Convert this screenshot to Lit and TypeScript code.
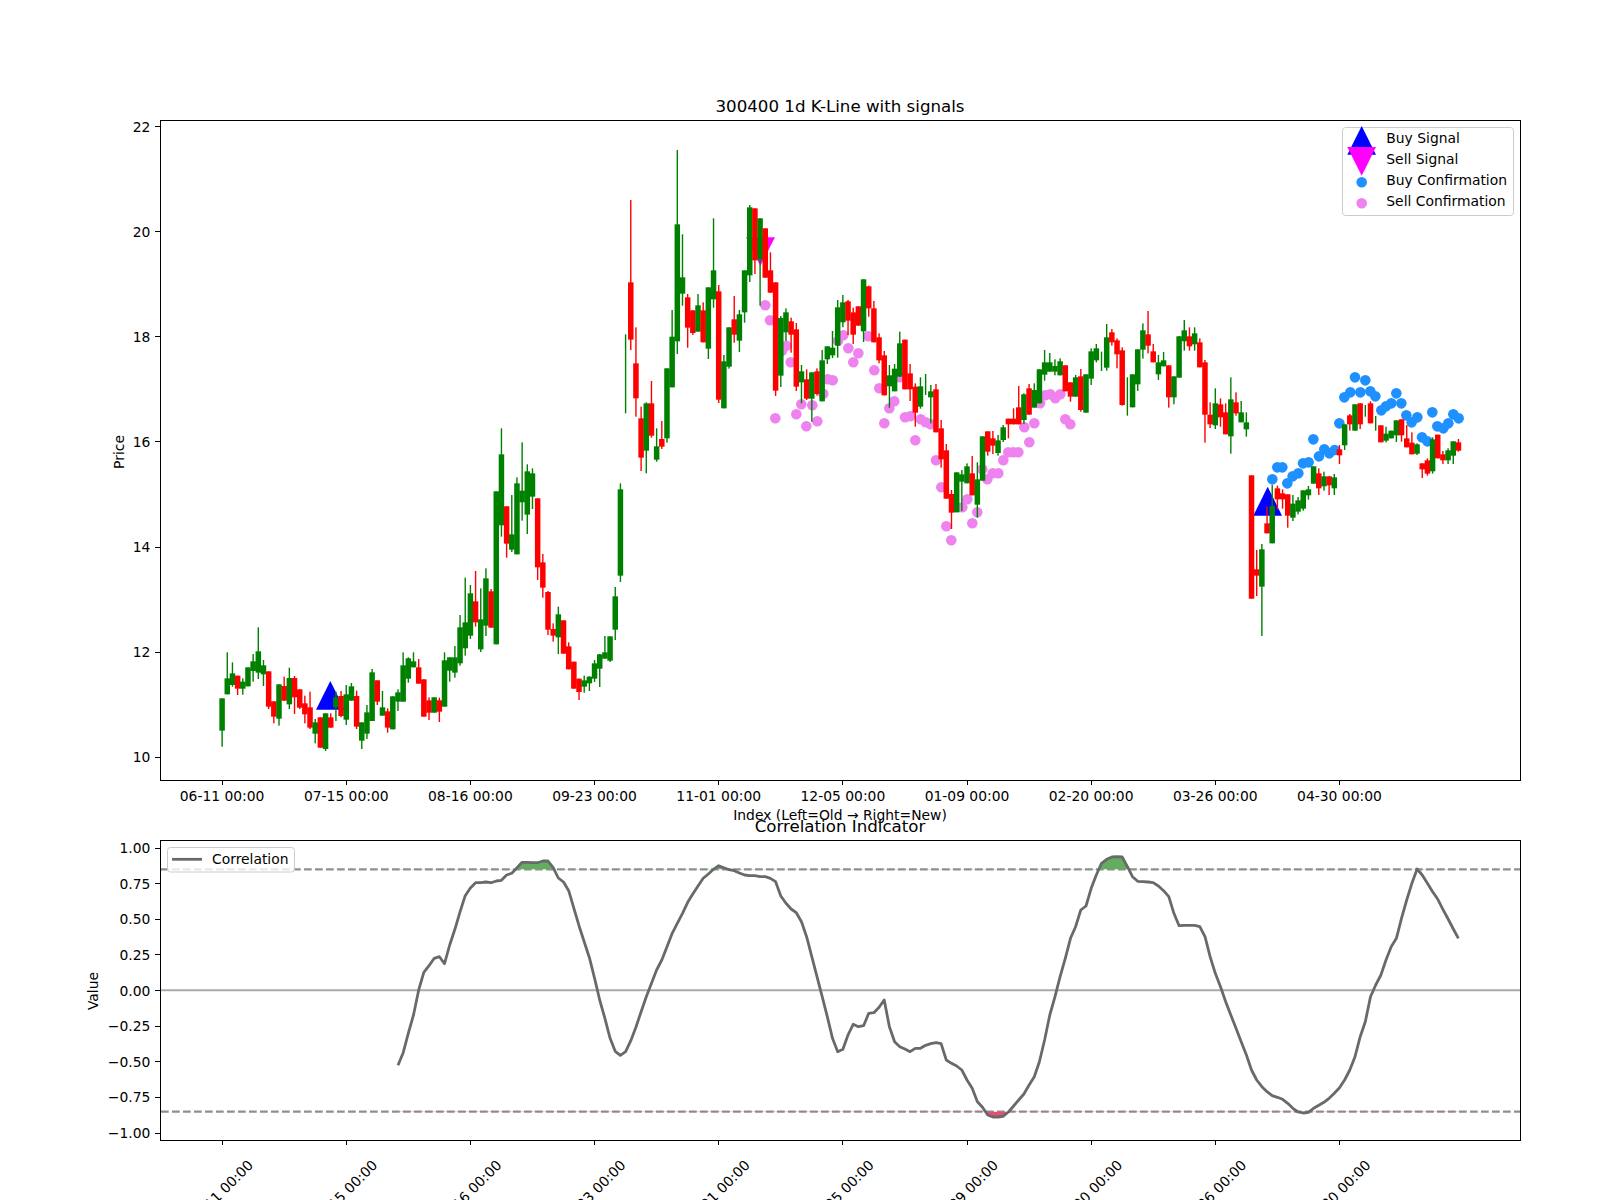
import { LitElement, html, css, svg } from 'lit'
import { customElement } from 'lit/decorators.js'

type Candle = { up: boolean; hi: number; top: number; bot: number; lo: number }

const X0 = 222.1
const DX = 5.173
const cx = (i: number) => X0 + DX * i

// each row: colour, wick top, body top, body bottom, wick bottom (read from crops at 3x)
const parse = (base: number, rows: string): Candle[] =>
  rows
    .trim()
    .split(/\s*;\s*/)
    .filter(Boolean)
    .map((r) => {
      const [c, a, b, d, e] = r.split(/\s+/)
      return {
        up: c === 'g',
        hi: base + +a / 3,
        top: base + +b / 3,
        bot: base + +d / 3,
        lo: base + +e / 3,
      }
    })

const candles: Candle[] = [
  ...parse(560, `g 415 415 512 560; g 277 355 403 403; g 307 340 375 380; r 347 347 386 405; g 355 365 386 404;
    g 322 322 379 379; g 282 304 333 365; g 202 274 338 357; g 300 316 343 378; r 334 334 440 447;
    r 424 424 470 490; g 373 373 476 497; r 350 378 422 422; g 323 354 433 447; r 348 354 412 462;
    r 388 388 443 447; r 407 430 463 490; r 395 442 503 507; g 477 487 521 550; r 472 472 563 563;
    g 460 460 567 573; r 460 472 503 503; g 395 412 442 483; r 393 408 468 472; g 375 403 479 495;
    g 369 379 422 422; r 392 408 500 507; g 487 487 542 567; g 435 457 521 537; g 327 337 483 483;
    r 361 361 425 435; g 393 442 467 467; r 445 454 503 518; g 409 409 508 508; g 388 397 425 453;
    g 277 316 425 425; g 292 295 356 368; g 277 304 322 322; r 297 322 371 371; r 358 358 470 470;
    r 412 421 458 480; g 412 412 458 458; r 413 421 455 486; g 277 301 440 440; g 292 292 332 365;
    g 258 292 338 353`),
  ...parse(400, `g 645 682 790 797; g 533 667 745 767; g 555 580 707 717; r 513 604 667 680; g 565 658 748 756;
    g 505 535 677 708; r 567 574 683 683; g 274 274 733 733; g 85 163 376 410; r 319 319 431 473;
    g 285 403 449 456; g 232 250 463 463; g 127 272 307 362; g 193 214 344 402; g 205 220 290 327;
    r 295 295 502 540; r 462 487 563 593; r 573 576 689 705; r 670 687 707 725; g 620 643 712 762;
    r 661 661 761 761; r 727 739 808 808; r 785 785 866 866; r 836 836 876 900; g 827 841 860 878;
    g 829 830 850 873; g 780 790 836 846; g 762 763 806 861; g 708 757 776 776; g 709 709 782 786;
    g 561 589 689 720; g 250 268 527 546`),
  ...parse(140, `g 583 700 700 820; r 180 427 599 630; r 562 670 775 830; r 800 835 953 993; g 787 790 932 1000;
    r 723 790 887 893; g 865 919 959 965; r 843 897 920 927; g 685 685 895 908; g 510 590 742 742;
    g 30 253 604 642; g 283 412 461 497; r 462 472 563 623; r 511 511 579 585; g 462 496 575 575;
    r 487 511 607 607; g 442 442 626 657; g 235 391 478 503; r 435 454 779 789; g 645 664 805 805;
    g 562 562 680 686; r 468 538 584 608; g 510 523 602 636; g 391 391 517 548; g 195 202 406 426;
    r 205 205 361 402; g 235 235 358 497; r 265 265 413 413; r 337 391 458 458; r 427 427 752 768;
    g 528 534 707 741; g 505 517 577 603; r 533 544 584 638; r 549 568 740 753; g 675 694 727 790;
    r 688 718 776 780; g 697 697 776 845; r 685 694 762 767; g 630 661 784 784; g 619 619 658 672;
    g 573 623 646 654; g 480 502 617 653; g 465 487 547 562; r 480 484 542 585; r 503 517 584 612;
    r 499 499 557 557; g 418 418 574 606; r 437 439 505 530; r 483 505 607 607; r 580 592 661 670;
    r 633 646 766 766; g 675 706 739 803; g 672 686 754 754; g 575 610 710 710`),
  ...parse(300, `r 119 119 268 268; r 192 220 268 303; r 250 260 338 380; g 232 259 320 326; g 222 250 250 285;
    g 255 274 292 370; r 252 268 397 397; r 360 385 478 503; r 432 451 596 596; r 570 582 638 687;
    g 517 517 637 637; g 510 523 545 633; g 490 499 550 550; r 468 520 586 586; g 487 538 614 653;
    g 409 409 542 542; r 394 394 455 467; r 393 415 437 462; g 405 421 459 467; g 375 382 420 426;
    r 356 356 373 415; r 325 356 373 373; r 258 322 373 373; g 280 283 360 372; r 252 265 344 344;
    g 250 270 323 323; g 208 208 310 310; g 150 187 224 242; g 159 187 215 215; g 178 198 215 226;
    g 175 184 226 226; r 196 196 274 274; r 247 247 290 305; g 225 232 290 290; r 207 229 330 335;
    g 223 223 338 338; g 145 154 236 255; g 132 145 181 187; g 155 190 190 213; g 72 112 203 212;
    r 87 97 127 137; r 115 121 163 205; r 142 151 315 317; g 232 290 290 347; g 223 223 322 322;
    g 148 148 253 273; g 70 91 149 176; r 33 103 137 160; r 132 154 187 187; g 165 187 223 240;
    g 156 181 199 199; r 196 196 292 323; g 229 229 292 313; g 108 109 233 233; g 60 91 124 152;
    r 82 109 139 152; g 82 100 133 152; r 115 127 202 202; r 180 187 344 428; r 307 344 373 384;
    g 265 310 376 387; r 295 313 352 380; r 310 337 403 403; g 232 298 409 461; r 277 307 340 347;
    g 303 337 367 367; g 337 367 388 410`),
  ...parse(360, `r 346 346 716 716; r 570 628 647 708; g 552 568 680 828; r 440 490 520 520; g 375 438 550 550;
    r 377 385 418 448; r 388 400 418 446; r 403 403 467 503; g 405 431 473 483; g 411 421 455 463;
    g 391 391 446 452; g 378 388 406 419; g 319 319 371 371; r 325 340 385 405; g 335 349 379 392;
    r 349 349 376 405; g 342 352 385 405; r 255 268 286 312; g 193 193 256 270; r 162 166 193 212;
    g 133 133 212 212; r 130 130 193 207; g 135 150 150 170; r 124 130 190 190; g 168 190 190 212;
    r 196 196 247 247; g 200 221 242 247; g 212 212 235 235; g 181 181 226 246; r 178 178 226 245;
    r 195 235 262 262; r 217 248 283 283; g 250 253 281 285; r 310 310 328 354; r 295 301 341 347;
    g 232 238 334 341; r 224 224 295 295; r 273 283 301 312; g 265 271 301 312; g 244 244 287 312;
    r 237 247 272 275`),
]

const violet: [number, number][] = [
  [765.3, 305.3], [770, 320.3], [786.3, 345.7], [782, 350.7], [790.7, 362.3], [775.3, 418.3], [801.3, 404.3],
  [812.3, 405.3], [796.3, 414.3], [806.3, 426.3], [817.3, 421.3], [827.7, 379.3], [832.7, 380.3], [823.3, 393.7],
  [843.3, 335.3], [848.3, 348.3], [858.3, 353.3], [853.3, 362.3], [838, 340.7], [868.3, 336.3], [874.3, 370.3],
  [879.3, 388.3], [894.3, 401.3], [889.3, 408.3], [884.3, 423.3], [899.3, 377.3], [905, 417.3], [910.3, 416.3],
  [920.7, 419.3], [925.7, 422.3], [930.7, 424.3], [915.3, 440.3], [936, 460.3], [941.3, 487.3], [946.3, 526.3],
  [951.3, 540.3], [962.3, 507.3], [967.3, 499.3], [972.3, 523.3], [977.3, 512.3], [982.3, 469.3], [987.3, 479.3],
  [992.7, 473.3], [998.3, 473.3], [1003.3, 460.3], [1008.3, 452.3], [1013.3, 452.3], [1018.3, 452.3],
  [1029.3, 442.3], [1024.3, 427.3], [1034.3, 423.3], [1040, 403.3], [1045.3, 395.3], [1050.3, 394.3],
  [1055.3, 398.3], [1060.3, 394.3], [1065.3, 419.3], [1070.3, 424.3],
]

// blue dots, crop coordinates of the 1230,360 crop
const blue = [
  [127, 358], [142, 322], [157, 322], [172, 370], [188, 349], [205, 340], [219, 310], [236, 307], [250, 238],
  [267, 289], [283, 268], [298, 280], [314, 270], [328, 190], [343, 112], [361, 97], [375, 52], [391, 97],
  [406, 61], [421, 94], [436, 109], [454, 151], [468, 139], [484, 130], [499, 100], [514, 130], [529, 166],
  [545, 187], [562, 172], [576, 232], [592, 244], [607, 157], [622, 199], [640, 205], [655, 190], [670, 163],
  [686, 175],
].map(([x, y]) => [1230 + x / 3, 360 + y / 3])

const corrLeft = [
  886, 848, 790, 735, 660, 607, 587, 565, 560, 581, 525, 478, 425, 377, 354, 338, 338, 336, 338, 333, 331, 315,
  310, 293, 277, 277, 278, 278, 273, 273, 293, 324, 336, 362, 415, 467, 515, 563, 625, 690, 745, 805, 844, 856,
  845, 812, 772, 725, 680, 640, 600, 570, 530, 490, 460, 430, 397, 372, 348, 325, 312, 298, 287, 293, 299, 302,
  309, 315, 317, 317, 320, 320, 325, 335, 378, 400, 417, 428, 455, 500, 560, 620, 680, 740, 805, 845, 838, 795,
  763, 770, 767, 730, 728, 712, 690, 770, 815, 830, 837, 845, 835, 835, 826, 821, 818, 821, 870, 880, 888, 900,
  930, 955, 995, 1012, 1035, 1041, 1041, 1039, 1026, 1008, 990, 972, 945, 920, 875, 810, 735, 680, 620, 565, 505,
  470, 420, 408, 355, 315, 280,
].map((z) => 770 + z / 3)

const corrRight = [
  118, 111, 110, 111, 140, 170, 184, 185, 186, 188, 198, 212, 230, 280, 317, 316, 316, 316, 320, 350, 410, 460,
  500, 545, 585, 625, 665, 705, 750, 780, 800, 815, 827, 832, 838, 850, 865, 876, 879, 877, 865, 856, 847, 835,
  820, 803, 780, 750, 710, 650, 605, 530, 495, 465, 420, 380, 355, 295, 240, 190, 147, 165, 190, 215, 238, 268,
  297, 327, 355,
].map((z) => 820 + z / 3)

const corr = [...corrLeft, ...corrRight].map((y, i) => [cx(34 + i), y])
const corrLine = corr.map(([x, y]) => `${x.toFixed(1)},${y.toFixed(1)}`).join(' ')

const HIGH_Y = 869.4
const LOW_Y = 1111.6

const dates = [
  '06-11 00:00', '07-15 00:00', '08-16 00:00', '09-23 00:00', '11-01 00:00',
  '12-05 00:00', '01-09 00:00', '02-20 00:00', '03-26 00:00', '04-30 00:00',
]
const priceTicks = [22, 20, 18, 16, 14, 12, 10]
const corrTicks = ['1.00', '0.75', '0.50', '0.25', '0.00', '\u22120.25', '\u22120.50', '\u22120.75', '\u22121.00']

const tickX = (k: number) => cx(k * 24)
const priceY = (p: number) => 757.2 - 52.55 * (p - 10)
const corrY = (k: number) => 848 + 35.625 * k

@customElement('app-root')
export class AppRoot extends LitElement {
  static styles = css`
    :host {
      display: block;
      width: 1600px;
      height: 1200px;
      background: #fff;
    }
    svg {
      display: block;
    }
    text {
      font-family: 'DejaVu Sans', sans-serif;
      font-size: 13.89px;
      fill: #000;
    }
    .title {
      font-size: 16.67px;
      text-anchor: middle;
    }
    .mid {
      text-anchor: middle;
    }
    .end {
      text-anchor: end;
    }
    .spine {
      fill: none;
      stroke: #000;
      stroke-width: 1;
      shape-rendering: crispEdges;
    }
    .tick {
      stroke: #000;
      stroke-width: 1;
      shape-rendering: crispEdges;
    }
    .up {
      fill: #008000;
    }
    .down {
      fill: #ff0000;
    }
    .buy {
      fill: #0000ff;
    }
    .sell {
      fill: #ff00ff;
    }
    .dot-buy {
      fill: #1e90ff;
    }
    .dot-sell {
      fill: #ee82ee;
    }
    .legend {
      fill: rgba(255, 255, 255, 0.8);
      stroke: #ccc;
      stroke-width: 1;
    }
    .zero {
      stroke: #aaa;
      stroke-width: 1.9;
    }
    .limit {
      stroke: #8f8f8f;
      stroke-width: 2.08;
      stroke-dasharray: 7.7 3.3;
    }
    .corr {
      fill: none;
      stroke: #696969;
      stroke-width: 2.78;
      stroke-linejoin: round;
    }
    .fill-high {
      fill: #62ad62;
    }
    .fill-low {
      fill: #e8506f;
    }
  `

  private renderCandles() {
    return candles.map((c, i) => {
      const x = cx(i)
      const cls = c.up ? 'up' : 'down'
      return svg`
        <rect class=${cls} x=${x - 0.7} y=${c.hi} width="1.4" height=${c.lo - c.hi}></rect>
        ${c.bot > c.top
          ? svg`<rect class=${cls} x=${x - 2.75} y=${c.top} width="5.5" height=${c.bot - c.top}></rect>`
          : ''}
      `
    })
  }

  private renderPriceAxes() {
    return svg`
      ${priceTicks.map(
        (p) => svg`
          <line class="tick" x1="155" x2="160" y1=${priceY(p)} y2=${priceY(p)}></line>
          <text class="end" x="150.3" y=${priceY(p) + 5}>${p}</text>
        `,
      )}
      ${dates.map(
        (d, k) => svg`
          <line class="tick" x1=${tickX(k)} x2=${tickX(k)} y1="780" y2="785"></line>
          <text class="mid" x=${tickX(k)} y="801">${d}</text>
        `,
      )}
      <rect class="spine" x="160.5" y="120.5" width="1360" height="660"></rect>
      <text class="title" x="840" y="111.7">300400 1d K-Line with signals</text>
      <text class="mid" x="840" y="820">Index (Left=Old → Right=New)</text>
      <text class="mid" transform="translate(124 452) rotate(-90)">Price</text>
    `
  }

  private renderPriceLegend() {
    return svg`
      <rect class="legend" x="1342.5" y="127.5" width="171" height="88" rx="3"></rect>
      <polygon class="buy" points="1361.7,126 1347.3,154.7 1376,154.7"></polygon>
      <polygon class="sell" points="1347.3,147 1376,147 1361.7,175.7"></polygon>
      <circle class="dot-buy" cx="1361.7" cy="182.3" r="5.3"></circle>
      <circle class="dot-sell" cx="1361.7" cy="203.3" r="5.3"></circle>
      <text x="1386.3" y="143">Buy Signal</text>
      <text x="1386.3" y="164">Sell Signal</text>
      <text x="1386.3" y="185">Buy Confirmation</text>
      <text x="1386.3" y="206">Sell Confirmation</text>
    `
  }

  private renderCorrelation() {
    const [firstX] = corr[0]
    const [lastX] = corr[corr.length - 1]
    return svg`
      <defs>
        <clipPath id="above"><rect x="160" y="840" width="1360" height=${HIGH_Y - 840}></rect></clipPath>
        <clipPath id="below"><rect x="160" y=${LOW_Y} width="1360" height=${1140 - LOW_Y}></rect></clipPath>
      </defs>
      <line class="zero" x1="161" x2="1520" y1="990.3" y2="990.3"></line>
      <line class="limit" x1="161" x2="1520" y1=${HIGH_Y} y2=${HIGH_Y}></line>
      <line class="limit" x1="161" x2="1520" y1=${LOW_Y} y2=${LOW_Y}></line>
      <polygon class="fill-high" clip-path="url(#above)"
        points="${corrLine} ${lastX},${HIGH_Y} ${firstX},${HIGH_Y}"></polygon>
      <polygon class="fill-low" clip-path="url(#below)"
        points="${corrLine} ${lastX},${LOW_Y} ${firstX},${LOW_Y}"></polygon>
      <polyline class="corr" points=${corrLine}></polyline>

      ${corrTicks.map(
        (t, k) => svg`
          <line class="tick" x1="155" x2="160" y1=${corrY(k)} y2=${corrY(k)}></line>
          <text class="end" x="150.3" y=${corrY(k) + 5}>${t}</text>
        `,
      )}
      ${dates.map(
        (d, k) => svg`
          <line class="tick" x1=${tickX(k)} x2=${tickX(k)} y1="1140" y2="1145"></line>
          <text class="mid" transform="translate(${tickX(k) - 1.5} 1192.5) rotate(-45)" y="5">${d}</text>
        `,
      )}
      <rect class="spine" x="160.5" y="840.5" width="1360" height="300"></rect>
      <text class="title" x="840" y="831.7">Correlation Indicator</text>
      <text class="mid" transform="translate(98 991) rotate(-90)">Value</text>

      <rect class="legend" x="167.5" y="847.5" width="127" height="24.5" rx="3"></rect>
      <line class="corr" x1="172" x2="202" y1="859.3" y2="859.3"></line>
      <text x="212" y="864.3">Correlation</text>
    `
  }

  render() {
    return html`
      <svg width="1600" height="1200" viewBox="0 0 1600 1200">
        ${violet.map(([x, y]) => svg`<circle class="dot-sell" cx=${x} cy=${y} r="5.3"></circle>`)}
        ${blue.map(([x, y]) => svg`<circle class="dot-buy" cx=${x} cy=${y} r="5.3"></circle>`)}
        <polygon class="buy" points="330.3,681 316,709.7 344.7,709.7"></polygon>
        <polygon class="buy" points="1267.7,486.7 1253.3,515.7 1282,515.7"></polygon>
        <polygon class="sell" points="746,237.3 775,237.3 760.3,266"></polygon>
        ${this.renderCandles()} ${this.renderPriceAxes()} ${this.renderPriceLegend()} ${this.renderCorrelation()}
      </svg>
    `
  }
}
